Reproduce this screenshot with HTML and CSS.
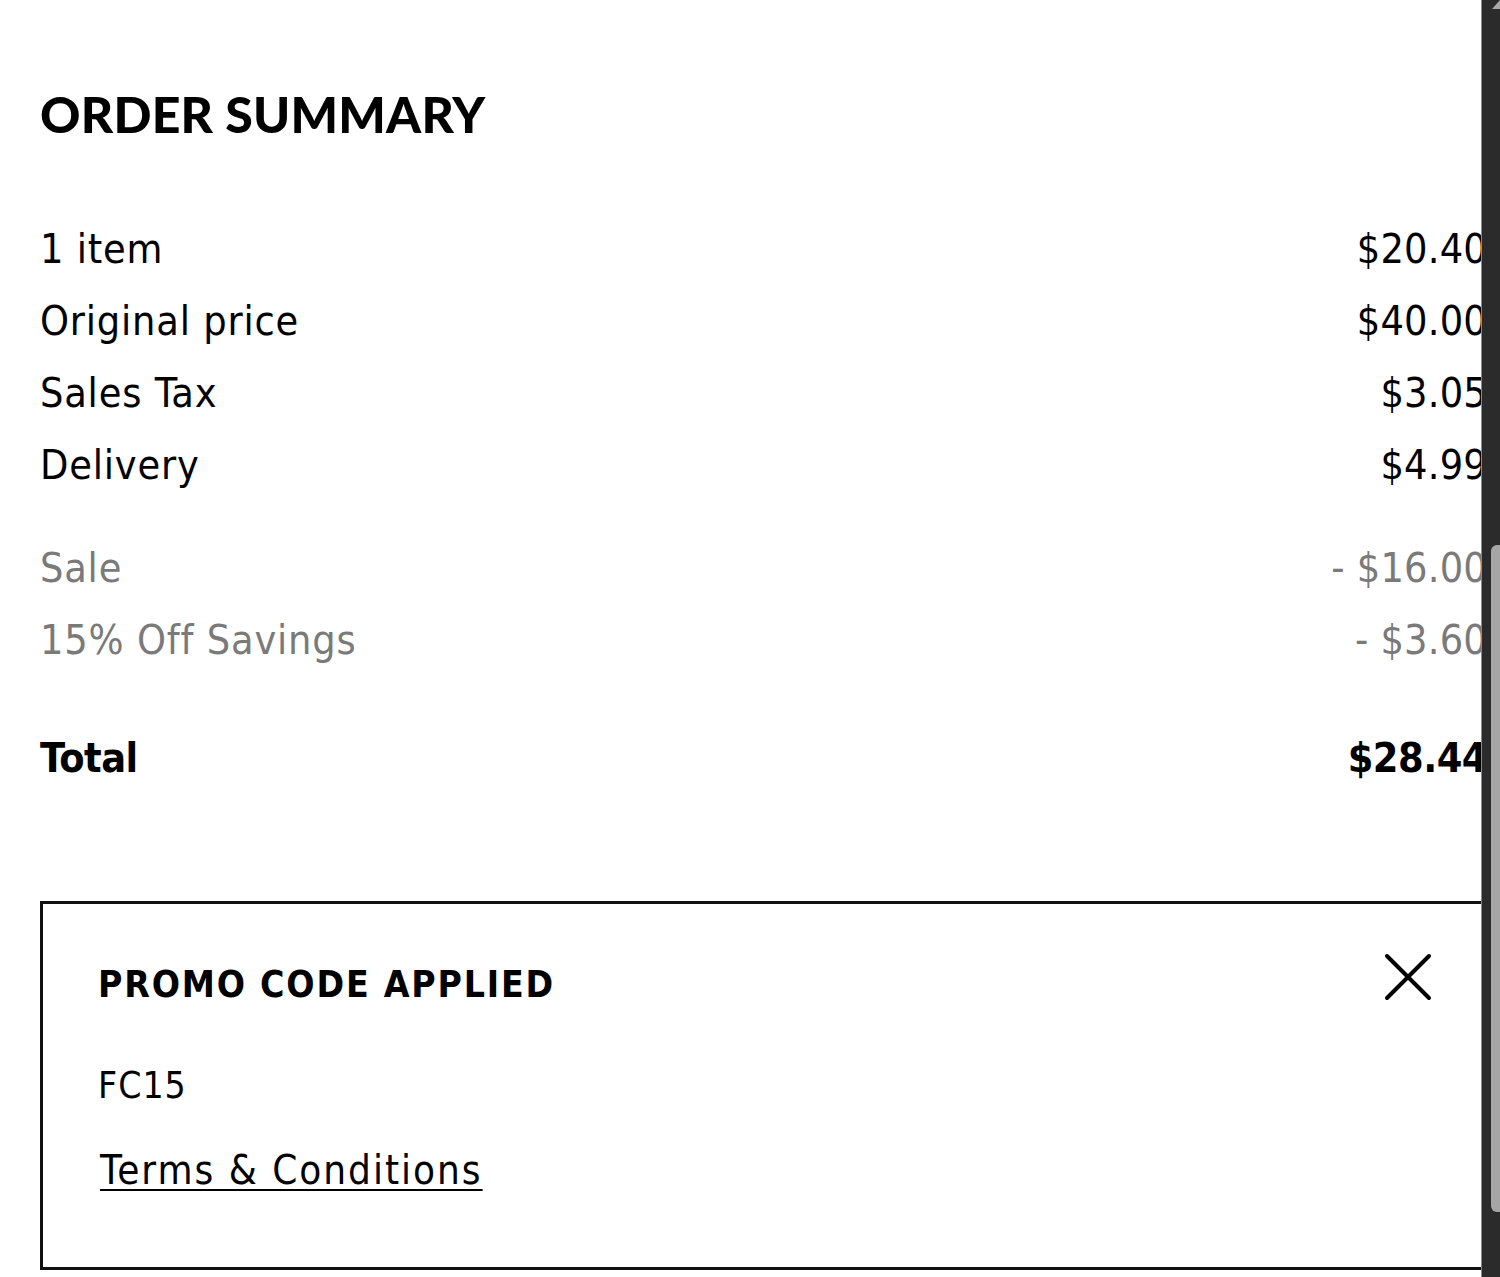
FILE: index.html
```html
<!DOCTYPE html>
<html lang="en">
<head>
<meta charset="utf-8">
<title>Order Summary</title>
<link rel="stylesheet" href="styles.css">
</head>
<body>
<main class="summary">
  <h2 class="title">ORDER SUMMARY</h2>
  <div class="lines">
    <div class="row"><span>1 item</span><span class="val">$20.40</span></div>
    <div class="row"><span>Original price</span><span class="val">$40.00</span></div>
    <div class="row"><span>Sales Tax</span><span class="val">$3.05</span></div>
    <div class="row"><span>Delivery</span><span class="val">$4.99</span></div>
  </div>
  <div class="lines discounts">
    <div class="row muted"><span>Sale</span><span class="val">- $16.00</span></div>
    <div class="row muted"><span>15% Off Savings</span><span class="val">- $3.60</span></div>
  </div>
  <div class="row total"><span>Total</span><span class="val">$28.44</span></div>

  <section class="promo">
    <div class="promo-head">
      <h3 class="promo-title">PROMO CODE APPLIED</h3>
      <button class="close" aria-label="Remove promo code">
        <svg width="48" height="48" viewBox="0 0 48 48"><path d="M3 3 L45 45 M45 3 L3 45" stroke="#000" stroke-width="4" stroke-linecap="round" fill="none"/></svg>
      </button>
    </div>
    <p class="code">FC15</p>
    <a class="terms" href="#">Terms &amp; Conditions</a>
  </section>
</main>
<div class="scrollbar">
  <svg class="arrow" width="10" height="10" viewBox="0 0 10 10"><path d="M10 0 L10 9 L2 9 Z" fill="#a9a9a9"/></svg>
  <div class="thumb"></div>
</div>
</body>
</html>
```
FILE: styles.css
```css
html, body {
  margin: 0;
  padding: 0;
  background: #fff;
  overflow: hidden;
}

body {
  width: 1500px;
  height: 1277px;
  font-family: "DejaVu Sans Condensed", "DejaVu Sans", sans-serif;
  color: #000;
}

.summary {
  padding: 84px 13px 0 40px;
}

.title {
  margin: 0;
  font-family: Lato, "Liberation Sans", sans-serif;
  font-weight: 900;
  font-size: 50px;
  line-height: 60px;
  letter-spacing: 0.2px;
}

.lines {
  margin-top: 69px;
}

.discounts {
  margin-top: 31px;
}

.row {
  display: flex;
  justify-content: space-between;
  font-size: 41px;
  line-height: 72px;
  letter-spacing: 0.8px;
}

.row .val {
  letter-spacing: 0.2px;
}

.muted {
  color: #7a7a7b;
}

.total {
  margin-top: 46px;
  font-weight: bold;
  letter-spacing: -0.5px;
}

.total .val {
  letter-spacing: -0.5px;
}

.promo {
  margin-top: 107px;
  border: 3px solid #111;
  padding: 59px 52px 75px 55px;
}

.promo-head {
  display: flex;
  justify-content: space-between;
  align-items: flex-start;
}

.promo-title {
  margin: 0;
  font-size: 37px;
  line-height: 44px;
  font-weight: bold;
  letter-spacing: 1.8px;
}

.close {
  margin: -10px 0 0 0;
  padding: 0;
  border: 0;
  background: none;
  width: 48px;
  height: 48px;
}

.close svg {
  display: block;
}

.code {
  margin: 57px 0 0 0;
  font-size: 37px;
  line-height: 44px;
  letter-spacing: 1px;
}

.terms {
  display: inline-block;
  margin-top: 40px;
  margin-left: 2px;
  font-size: 40px;
  line-height: 44px;
  letter-spacing: 2px;
  color: #000;
  text-decoration: underline;
  text-decoration-thickness: 2px;
  text-underline-offset: 5px;
}

.scrollbar {
  position: fixed;
  top: 0;
  right: 0;
  width: 18px;
  height: 1277px;
  background: #2b2b2b;
  border-left: 1px solid #8a8a8a;
}

.arrow {
  position: absolute;
  top: 0;
  right: 0;
}

.thumb {
  position: absolute;
  top: 545px;
  right: 0;
  width: 9px;
  height: 667px;
  background: #a6a6a6;
  border-radius: 6px 0 0 6px;
}
```
